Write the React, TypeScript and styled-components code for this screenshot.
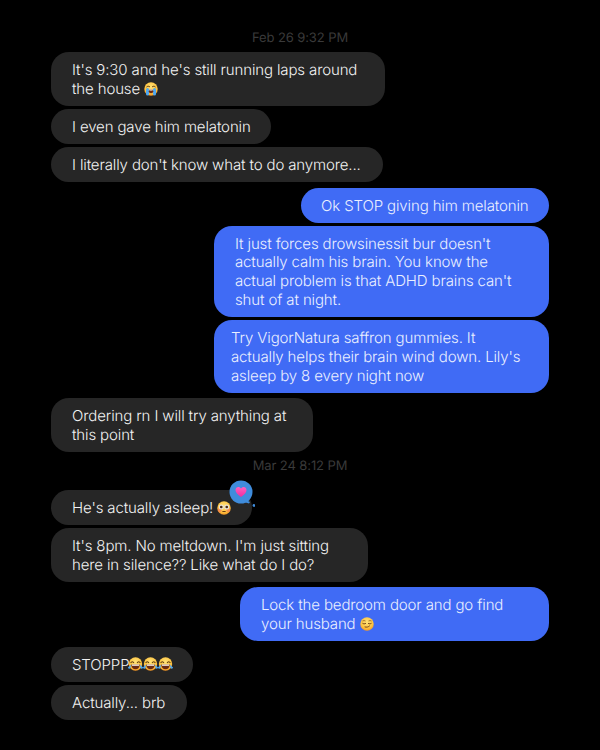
import React from 'react'
import styled, { createGlobalStyle } from 'styled-components'

const Global = createGlobalStyle`
html, body {
  margin: 0;
  padding: 0;
  background: #000;
}
`

const EmojiSvg = styled.svg`
  display: inline-block;
  width: 14px;
  height: 14px;
  vertical-align: -2px;
`

const FaceDefs = ({ id }: { id: string }) => (
  <defs>
    <radialGradient id={id} cx="50%" cy="35%" r="70%">
      <stop offset="0%" stopColor="#FFE27A" />
      <stop offset="65%" stopColor="#FDC33F" />
      <stop offset="100%" stopColor="#F08A1E" />
    </radialGradient>
  </defs>
)

const Sob = () => (
  <EmojiSvg viewBox="0 0 28 28">
    <FaceDefs id="sob" />
    <circle cx="14" cy="14" r="13.500" fill="url(#sob)" />
    <path d="M5 10c2-2 5-2 7 0M16 10c2-2 5-2 7 0" stroke="#5b3a10" strokeWidth="2" fill="none" />
    <rect x="4" y="12" width="6" height="15" rx="3" fill="#4FA8F0" />
    <rect x="18" y="12" width="6" height="15" rx="3" fill="#4FA8F0" />
    <ellipse cx="14" cy="18.500" rx="4.500" ry="4" fill="#6B2A12" />
    <rect x="11" y="15" width="6" height="2" fill="#fff" />
  </EmojiSvg>
)

const Flushed = () => (
  <EmojiSvg viewBox="0 0 28 28">
    <FaceDefs id="flushed" />
    <circle cx="14" cy="14" r="13.500" fill="url(#flushed)" />
    <circle cx="5.500" cy="18" r="4" fill="#F4705A" opacity="0.6" />
    <circle cx="22.500" cy="18" r="4" fill="#F4705A" opacity="0.6" />
    <circle cx="8.500" cy="12" r="5" fill="#E8E4DC" />
    <circle cx="19.500" cy="12" r="5" fill="#E8E4DC" />
    <circle cx="8.500" cy="12" r="2.600" fill="#4a2a10" />
    <circle cx="19.500" cy="12" r="2.600" fill="#4a2a10" />
    <rect x="10.500" y="20" width="7" height="2" rx="1" fill="#6B3A12" />
  </EmojiSvg>
)

const Smirk = () => (
  <EmojiSvg viewBox="0 0 28 28">
    <FaceDefs id="smirk" />
    <circle cx="14" cy="14" r="13.500" fill="url(#smirk)" />
    <path d="M5 8c2-1 4-1 6 0M17 8c2-1 4-1 6 0" stroke="#8A5A1A" strokeWidth="1.600" fill="none" />
    <path d="M5 12.500c2 1.400 5 1.400 7 0M16 12.500c2 1.400 5 1.400 7 0" stroke="#6B3A12" strokeWidth="2" fill="none" />
    <path d="M10 20c3 1 7 0 9-2" stroke="#6B3A12" strokeWidth="1.800" strokeLinecap="round" fill="none" />
  </EmojiSvg>
)

const Joy = ({ id }: { id: string }) => (
  <JoyFace viewBox="0 0 28 28">
    <FaceDefs id={id} />
    <circle cx="14" cy="13" r="12.500" fill={`url(#${id})`} />
    <path d="M5 11c1.500-3 4.500-3 6 0M17 11c1.500-3 4.500-3 6 0" stroke="#5b3a10" strokeWidth="2" fill="none" />
    <path d="M6 14h16c0 6-3.500 9-8 9s-8-3-8-9z" fill="#6B2A12" />
    <path d="M7 14h14l-.6 2.500H7.600z" fill="#fff" />
    <path d="M0 19c2-1 4-3 5-5 1 3 0 7-2 8-1.500.5-3-1.500-3-3zM28 19c-2-1-4-3-5-5-1 3 0 7 2 8 1.500.5 3-1.500 3-3z" fill="#4FA8F0" />
  </JoyFace>
)

const App = () => {
  return (
    <Page>
      <Global />
      <Time $top={31}>Feb 26 9:32 PM</Time>
      <Bubble $w={334} $top={6}>
        It's 9:30 and he's still running laps around
        <br />
        the house <Sob />
      </Bubble>
      <Bubble $w={220}>I even gave him melatonin</Bubble>
      <Bubble $w={332}>I literally don't know what to do anymore...</Bubble>
      <Bubble $me $w={248} $top={6} $pad={20}>
        Ok STOP giving him melatonin
      </Bubble>
      <Bubble $me $w={335}>
        It just forces drowsinessit bur doesn't
        <br />
        actually calm his brain. You know the
        <br />
        actual problem is that ADHD brains can't
        <br />
        shut of at night.
      </Bubble>
      <Bubble $me $w={335} $pad={17}>
        Try VigorNatura saffron gummies. It
        <br />
        actually helps their brain wind down. Lily's
        <br />
        asleep by 8 every night now
      </Bubble>
      <Bubble $w={262} $top={5.5}>
        Ordering rn I will try anything at
        <br />
        this point
      </Bubble>
      <Time $top={7}>Mar 24 8:12 PM</Time>
      <Bubble $w={201} $top={16}>
        He's actually asleep! <Flushed />
        <Reaction viewBox="0 0 26 28">
          <defs>
            <linearGradient id="heart" x1="0" y1="0" x2="0" y2="1">
              <stop offset="0%" stopColor="#FF5FC0" />
              <stop offset="100%" stopColor="#EE2E9E" />
            </linearGradient>
          </defs>
          <circle cx="12" cy="12" r="11.500" fill="#3F8CDC" />
          <path d="M17 20l4 2-1 1.500-5-1.500z" fill="#3F8CDC" />
          <circle cx="25" cy="25.500" r="1.400" fill="#3F8CDC" />
          <path d="M12 17C8 14.200 6.500 12 6.500 10c0-1.800 1.400-3 2.800-3 1.100 0 2 .6 2.700 1.600.7-1 1.600-1.600 2.700-1.600 1.400 0 2.800 1.200 2.800 3 0 2-1.500 4.200-5.500 7z" fill="url(#heart)" />
        </Reaction>
      </Bubble>
      <Bubble $w={317}>
        It's 8pm. No meltdown. I'm just sitting
        <br />
        here in silence?? Like what do I do?
      </Bubble>
      <Bubble $me $w={309} $top={5.5}>
        Lock the bedroom door and go find
        <br />
        your husband <Smirk />
      </Bubble>
      <Bubble $w={142} $top={6}>
        STOPPP
        <JoyRow>
          <Joy id="j1" />
          <Joy id="j2" />
          <Joy id="j3" />
        </JoyRow>
      </Bubble>
      <Bubble $w={136}>Actually... brb</Bubble>
    </Page>
  )
}

export default App

const Page = styled.div`
  box-sizing: border-box;
  width: 600px;
  height: 750px;
  overflow: hidden;
  background: #000;
  padding: 0 51px;
  display: flex;
  flex-direction: column;
  font-family: Inter, "Liberation Sans", sans-serif;
  text-rendering: geometricPrecision;
`
const Time = styled.div<{ $top: number }>`
  margin-top: ${(p) => p.$top}px;
  height: 15px;
  line-height: 15px;
  font-size: 13px;
  letter-spacing: -0.1px;
  text-align: center;
  color: #3a3a3a;
`
const Bubble = styled.div<{ $me?: boolean; $w: number; $top?: number; $pad?: number }>`
  position: relative;
  box-sizing: border-box;
  width: ${(p) => p.$w}px;
  margin-top: ${(p) => p.$top ?? 3}px;
  align-self: ${(p) => (p.$me ? 'flex-end' : 'flex-start')};
  padding: 9px 10px 7px ${(p) => p.$pad ?? 21}px;
  border-radius: 18px;
  background: ${(p) => (p.$me ? '#406BF5' : '#262626')};
  color: ${(p) => (p.$me ? '#EAEFFF' : '#F2F2F2')};
  font-size: 15px;
  font-weight: 350;
  line-height: 18.9px;
  letter-spacing: -0.13px;
  white-space: nowrap;
`
const JoyRow = styled.span`
  display: inline-flex;
  vertical-align: -2px;
  margin-left: -1px;
`
const JoyFace = styled(EmojiSvg)`
  width: 15px;
  height: 15px;
`
const Reaction = styled.svg`
  position: absolute;
  top: -10px;
  right: -3px;
  width: 26px;
  height: 28px;
`
